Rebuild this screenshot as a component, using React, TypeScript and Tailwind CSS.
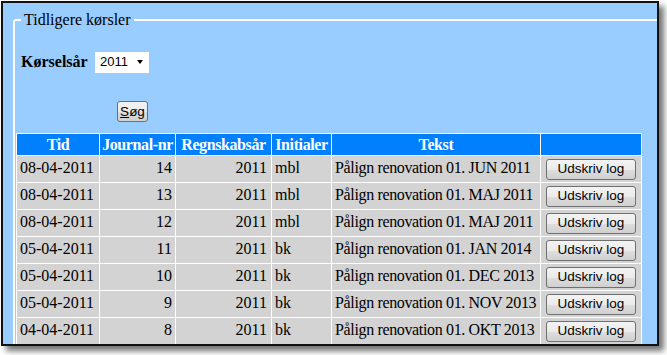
import React from "react";

type Row = { tid: string; nr: number; aar: number; ini: string; tekst: string };

const rows: Row[] = [
  { tid: "08-04-2011", nr: 14, aar: 2011, ini: "mbl", tekst: "Pålign renovation 01. JUN 2011" },
  { tid: "08-04-2011", nr: 13, aar: 2011, ini: "mbl", tekst: "Pålign renovation 01. MAJ 2011" },
  { tid: "08-04-2011", nr: 12, aar: 2011, ini: "mbl", tekst: "Pålign renovation 01. MAJ 2011" },
  { tid: "05-04-2011", nr: 11, aar: 2011, ini: "bk", tekst: "Pålign renovation 01. JAN 2014" },
  { tid: "05-04-2011", nr: 10, aar: 2011, ini: "bk", tekst: "Pålign renovation 01. DEC 2013" },
  { tid: "05-04-2011", nr: 9, aar: 2011, ini: "bk", tekst: "Pålign renovation 01. NOV 2013" },
  { tid: "04-04-2011", nr: 8, aar: 2011, ini: "bk", tekst: "Pålign renovation 01. OKT 2013" },
];

const btn =
  "border border-[#707070] rounded-[3px] bg-[linear-gradient(#f3f3f3_0%,#ebebeb_50%,#dedede_51%,#d0d0d0_100%)] text-[13.5px] text-black leading-none font-['Liberation_Sans',Arial,sans-serif] flex items-center justify-center";

export default function App() {
  return (
    <div className="w-[667px] h-[355px] bg-white pt-px pl-px overflow-hidden font-['Liberation_Serif','Times_New_Roman',serif] text-black">
      <div className="w-[658px] h-[345px] border-2 border-[#111] bg-[#99ccff] overflow-hidden shadow-[5px_5px_6px_rgba(0,0,0,0.55)]">
        <fieldset className="ml-[10px] mt-[5px] w-[700px] min-w-0 border-2 border-white rounded-[3px] pl-px pr-0 pt-0 pb-0">
          <legend className="ml-[5px] px-[3px] text-[16px]">Tidligere kørsler</legend>

          {/* year filter */}
          <div className="mt-[18px] flex items-center">
            <span className="ml-[5px] w-[74px] text-[16px] font-bold">Kørselsår</span>
            <div className="w-[54px] h-[21px] bg-white flex items-center pl-[5px] pr-[6px] justify-between font-['Liberation_Sans',Arial,sans-serif] text-[13px]">
              <span>2011</span>
              <span className="w-0 h-0 border-l-[3px] border-r-[3px] border-t-[4px] border-l-transparent border-r-transparent border-t-black" />
            </div>
          </div>

          <div className="mt-[27px] ml-[101px]">
            <button className={`${btn} w-[31px] h-[21px]`}>
              <span className="underline">S</span>øg
            </button>
          </div>

          {/* results */}
          <table className="mt-[11px] table-fixed border-separate border-spacing-[1px] bg-white text-[16px] leading-[18px] w-[626px]">
            <colgroup>
              <col className="w-[82px]" />
              <col className="w-[75px]" />
              <col className="w-[95px]" />
              <col className="w-[59px]" />
              <col className="w-[208px]" />
              <col className="w-[100px]" />
            </colgroup>
            <thead>
              <tr className="bg-[#0080ff] text-white font-bold tracking-[-0.4px]">
                <th className="p-0 h-[21px] text-center whitespace-nowrap">Tid</th>
                <th className="p-0 h-[21px] text-center whitespace-nowrap">Journal-nr</th>
                <th className="p-0 h-[21px] text-center whitespace-nowrap">Regnskabsår</th>
                <th className="p-0 h-[21px] text-center whitespace-nowrap">Initialer</th>
                <th className="p-0 h-[21px] text-center whitespace-nowrap">Tekst</th>
                <th className="p-0 h-[21px]"></th>
              </tr>
            </thead>
            <tbody>
              {rows.map((r, i) => (
                <tr key={i} className="bg-[#d3d3d3]">
                  <td className="p-0 h-[26px] pb-[2px] pl-[3px] whitespace-nowrap">{r.tid}</td>
                  <td className="p-0 h-[26px] pb-[2px] pr-[3px] text-right">{r.nr}</td>
                  <td className="p-0 h-[26px] pb-[2px] pr-[4px] text-right">{r.aar}</td>
                  <td className="p-0 h-[26px] pb-[2px] pl-[3px]">{r.ini}</td>
                  <td className="p-0 h-[26px] pb-[2px] pl-[3px] whitespace-nowrap tracking-[-0.35px]">{r.tekst}</td>
                  <td className="p-0 h-[26px] pl-[5px]">
                    <button className={`${btn} w-[90px] h-[21px]`}>Udskriv log</button>
                  </td>
                </tr>
              ))}
            </tbody>
          </table>
        </fieldset>
      </div>
    </div>
  );
}
